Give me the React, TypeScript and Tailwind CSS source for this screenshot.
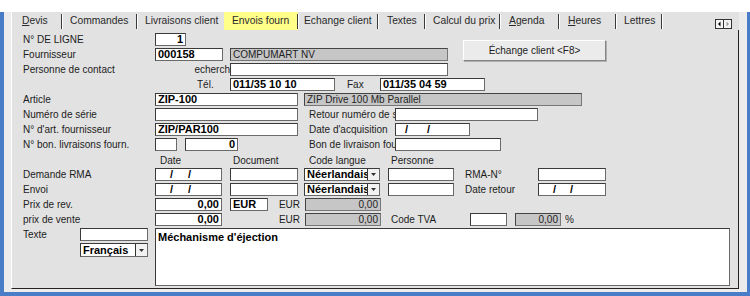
import React from "react";

const F = "font-['Liberation_Sans',Arial,Helvetica,sans-serif]";

function Lbl({ className = "", children }: { className?: string; children?: React.ReactNode }) {
  return (
    <div className={"h-[13px] flex items-center whitespace-nowrap overflow-hidden text-[10px] leading-none text-[#1c1c1c] " + className}>
      {children}
    </div>
  );
}

function Inp({ className = "", children }: { className?: string; children?: React.ReactNode }) {
  return (
    <div
      className={
        "h-[13px] shrink-0 bg-white border border-t-[#3a3a3a] border-l-[#3a3a3a] border-b-[#6a6a6a] border-r-[#6a6a6a] flex items-center overflow-hidden whitespace-nowrap px-[2px] text-[11px] font-bold leading-none text-black " +
        className
      }
    >
      {children}
    </div>
  );
}

function Gray({ className = "", children }: { className?: string; children?: React.ReactNode }) {
  return (
    <div
      className={
        "h-[13px] shrink-0 bg-[#c6c6c6] border border-t-[#444] border-l-[#444] border-b-[#777] border-r-[#777] flex items-center overflow-hidden whitespace-nowrap px-[2px] text-[10px] leading-none text-[#222] " +
        className
      }
    >
      {children}
    </div>
  );
}

function Sel({ className = "", children }: { className?: string; children?: React.ReactNode }) {
  return (
    <div
      className={
        "h-[13px] shrink-0 bg-white border border-t-[#3a3a3a] border-l-[#3a3a3a] border-b-[#6a6a6a] border-r-[#6a6a6a] flex items-stretch overflow-hidden " +
        className
      }
    >
      <div className="flex-1 overflow-hidden whitespace-nowrap pl-[2px] flex items-center text-[11px] font-bold leading-none text-black">
        {children}
      </div>
      <div className="w-[12px] shrink-0 border-l border-[#333] bg-[#f2f2f2] flex items-center justify-center">
        <svg width="5" height="3" viewBox="0 0 5 3">
          <path d="M0 0 H5 L2.5 3 Z" fill="#333" />
        </svg>
      </div>
    </div>
  );
}

function Row({ children }: { children?: React.ReactNode }) {
  return <div className="flex h-[15px] items-start">{children}</div>;
}

function Tab({
  className = "",
  children,
  sep = true,
}: {
  className?: string;
  children?: React.ReactNode;
  sep?: boolean;
}) {
  return (
    <div className={"h-full shrink-0 flex items-center relative text-[10.3px] leading-none text-[#2a2a2a] whitespace-nowrap " + className}>
      {children}
      {sep && <span className="absolute right-0 top-[2px] h-[15px] w-[1px] bg-[#3a3a3a] shadow-[1px_0_0_#ffffff]" />}
    </div>
  );
}

function Slashes({ a, b }: { a: string; b: string }) {
  return (
    <>
      <span className={a}>/</span>
      <span className={b}>/</span>
    </>
  );
}

export default function App() {
  return (
    <div className={"w-[750px] h-[296px] bg-white flex flex-col overflow-hidden " + F}>
      <div className="h-[12px] shrink-0 bg-white" />
      <div className="flex h-[280px] shrink-0">
        <div className="w-[4px] bg-[#4a7dc8] shrink-0" />
        <div className="w-[7px] bg-[#ececec] shrink-0" />
        <div className="flex flex-col w-[728px] shrink-0">
          {/* Tabs */}
          <div className="h-[18px] flex bg-[#e2e2e2] border-l border-white pl-0">
            <Tab className="w-[50px] pl-[10px]">
              <span><span className="underline">D</span>evis</span>
            </Tab>
            <Tab className="w-[75px] pl-[8px]">Commandes</Tab>
            <Tab className="w-[87px] pl-[8px]" sep={false}>Livraisons client</Tab>
            <Tab className="w-[74px] pl-[8px] bg-[#ffff8a]">Envois fourn</Tab>
            <Tab className="w-[80px] pl-[6px]">Echange client</Tab>
            <Tab className="w-[47px] pl-[9px]">Textes</Tab>
            <Tab className="w-[75px] pl-[8px]">Calcul du prix</Tab>
            <Tab className="w-[59px] pl-[9px]">
              <span><span className="underline">A</span>genda</span>
            </Tab>
            <Tab className="w-[57px] pl-[9px]">
              <span><span className="underline">H</span>eures</span>
            </Tab>
            <Tab className="w-[46px] pl-[8px]">Lettres</Tab>
            <div className="flex-1" />
            <div className="mt-[7px] mr-[7px] self-start">
              <svg width="17" height="10" viewBox="0 0 17 10">
                <rect x="0.5" y="0.5" width="16" height="9" fill="#f4f4f4" stroke="#333" />
                <line x1="8.5" y1="0.5" x2="8.5" y2="9.5" stroke="#333" />
                <path d="M5.5 2.5 L3 5 L5.5 7.5 Z" fill="#000" />
                <path d="M11.5 2.5 L14 5 L11.5 7.5 Z" fill="#9a9a9a" />
              </svg>
            </div>
          </div>
          {/* Panel */}
          <div className="h-[259px] bg-[#e2e2e2] border-l border-white border-r border-r-[#222] border-b border-b-[#222] pl-[11px] pt-[3px] flex flex-col">
            <div className="flex">
              <div className="flex flex-col w-[425px]">
                <Row>
                  <Lbl className="w-[132px]">N° DE LIGNE</Lbl>
                  <Inp className="w-[31px] bg-[#ffff80] justify-end">1</Inp>
                </Row>
                <Row>
                  <Lbl className="w-[132px]">Fournisseur</Lbl>
                  <Inp className="w-[68px]">000158</Inp>
                  <Gray className="ml-[7px] w-[218px]">COMPUMART NV</Gray>
                </Row>
              </div>
              <button className="ml-[15px] mt-[7px] w-[143px] h-[21px] bg-[#ebebeb] border border-t-white border-l-white border-b-[#858585] border-r-[#858585] shadow-[1px_1px_0_#b0b0b0] text-[10px] text-[#222] leading-none flex items-center justify-center">
                Échange client &lt;F8&gt;
              </button>
            </div>
            <Row>
              <Lbl className="w-[132px]">Personne de contact</Lbl>
              <Lbl className="w-[75px] justify-end">echerch</Lbl>
              <Inp className="w-[218px]" />
            </Row>
            <Row>
              <div className="w-[174px] shrink-0" />
              <Lbl className="w-[33px]">Tél.</Lbl>
              <Inp className="w-[105px]">011/35 10 10</Inp>
              <Lbl className="w-[45px] pl-[12px]">Fax</Lbl>
              <Inp className="w-[105px]">011/35 04 59</Inp>
            </Row>
            <Row>
              <Lbl className="w-[132px]">Article</Lbl>
              <Inp className="w-[143px]">ZIP-100</Inp>
              <Gray className="ml-[6px] w-[278px]">ZIP Drive 100 Mb Parallel</Gray>
            </Row>
            <Row>
              <Lbl className="w-[132px]">Numéro de série</Lbl>
              <Inp className="w-[143px]" />
              <Lbl className="w-[97px] pl-[11px]">Retour numéro de série</Lbl>
              <Inp className="w-[143px]" />
            </Row>
            <Row>
              <Lbl className="w-[132px]">N° d&apos;art. fournisseur</Lbl>
              <Inp className="w-[143px]">ZIP/PAR100</Inp>
              <Lbl className="w-[97px] pl-[11px]">Date d&apos;acquisition</Lbl>
              <Inp className="w-[75px]">
                <Slashes a="ml-[7px]" b="ml-[19px]" />
              </Inp>
            </Row>
            <Row>
              <Lbl className="w-[132px]">N° bon. livraisons fourn.</Lbl>
              <Inp className="w-[22px]" />
              <Inp className="ml-[8px] w-[53px] justify-end">0</Inp>
              <Lbl className="ml-[60px] w-[97px] pl-[11px]">Bon de livraison fournisseur</Lbl>
              <Inp className="w-[106px]" />
            </Row>
            <Row>
              <Lbl className="w-[137px] mt-[1px]" />
              <Lbl className="w-[73px] mt-[1px]">Date</Lbl>
              <Lbl className="w-[76px] mt-[1px]">Document</Lbl>
              <Lbl className="w-[82px] mt-[1px]">Code langue</Lbl>
              <Lbl className="mt-[1px]">Personne</Lbl>
            </Row>
            <Row>
              <Lbl className="w-[132px]">Demande RMA</Lbl>
              <Inp className="w-[67px]">
                <Slashes a="ml-[12px]" b="ml-[15px]" />
              </Inp>
              <Inp className="ml-[8px] w-[68px]" />
              <Sel className="ml-[6px] w-[76px]">Néerlandais</Sel>
              <Inp className="ml-[8px] w-[66px]" />
              <Lbl className="w-[84px] pl-[11px]">RMA-N°</Lbl>
              <Inp className="w-[68px]" />
            </Row>
            <Row>
              <Lbl className="w-[132px]">Envoi</Lbl>
              <Inp className="w-[67px]">
                <Slashes a="ml-[12px]" b="ml-[15px]" />
              </Inp>
              <Inp className="ml-[8px] w-[68px]" />
              <Sel className="ml-[6px] w-[76px]">Néerlandais</Sel>
              <Inp className="ml-[8px] w-[66px]" />
              <Lbl className="w-[84px] pl-[11px]">Date retour</Lbl>
              <Inp className="w-[68px]">
                <Slashes a="ml-[12px]" b="ml-[14px]" />
              </Inp>
            </Row>
            <Row>
              <Lbl className="w-[132px]">Prix de rev.</Lbl>
              <Inp className="w-[67px] justify-end">0,00</Inp>
              <Inp className="ml-[8px] w-[38px]">EUR</Inp>
              <Lbl className="w-[32px] justify-end">EUR</Lbl>
              <Gray className="ml-[5px] w-[76px] justify-end">0,00</Gray>
            </Row>
            <Row>
              <Lbl className="w-[132px]">prix de vente</Lbl>
              <Inp className="w-[67px] justify-end">0,00</Inp>
              <div className="w-[46px] shrink-0" />
              <Lbl className="w-[32px] justify-end">EUR</Lbl>
              <Gray className="ml-[5px] w-[76px] justify-end">0,00</Gray>
              <Lbl className="w-[89px] pl-[10px]">Code TVA</Lbl>
              <Inp className="w-[37px]" />
              <Gray className="ml-[8px] w-[46px] justify-end">0,00</Gray>
              <Lbl className="ml-[4px]">%</Lbl>
            </Row>
            <div className="flex items-start">
              <Lbl className="w-[57px]">Texte</Lbl>
              <div className="w-[68px] flex flex-col">
                <Inp className="w-[68px]" />
                <Sel className="mt-[2px] w-[68px] h-[14px]">Français</Sel>
              </div>
              <div className="ml-[7px] w-[575px] h-[58px] bg-white border border-t-[#3a3a3a] border-l-[#3a3a3a] border-b-[#6a6a6a] border-r-[#6a6a6a] px-[2px] pt-[3px] text-[11px] font-bold leading-none text-black">
                Méchanisme d&apos;éjection
              </div>
            </div>
          </div>
          <div className="h-[3px] bg-[#ececec]" />
        </div>
        <div className="w-[8px] bg-[#ececec] shrink-0" />
        <div className="w-[3px] bg-[#4a7dc8] shrink-0" />
      </div>
      <div className="h-[4px] shrink-0 bg-[#4a7dc8]" />
    </div>
  );
}
